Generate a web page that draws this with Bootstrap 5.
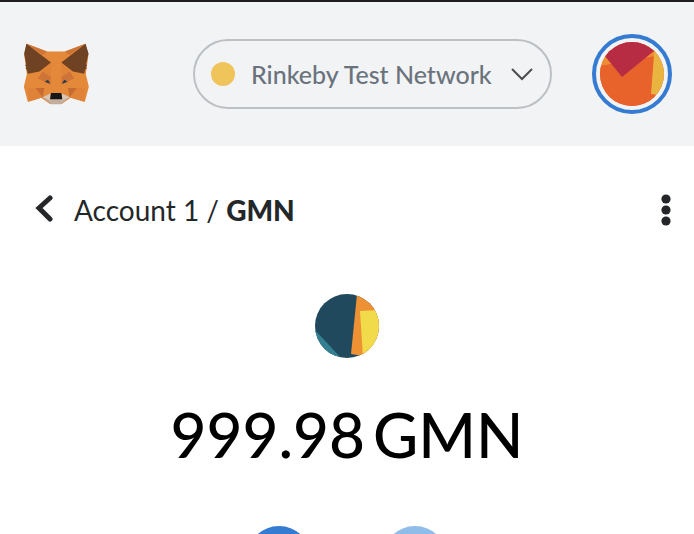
<!DOCTYPE html>
<html lang="en">
<head>
<meta charset="utf-8">
<meta name="viewport" content="width=device-width, initial-scale=1">
<title>GMN – Account 1</title>
<link href="https://cdn.jsdelivr.net/npm/bootstrap@5.3.0/dist/css/bootstrap.min.css" rel="stylesheet">
<style>
body { font-family: Lato, sans-serif; color: #24272a; }
.app-bar { background: #f2f3f4; border-top: 2px solid #1f1d22; padding: 32px 22px 32px 23px; gap: 40px; }
.network { border: 2px solid #bbc0c5; color: #6a737d; font-family: "Lato Medium", Lato, sans-serif; font-size: 25px; font-weight: 500; line-height: 32px; height: 70px; padding: 0 16px; gap: 16px; width: 359px; }
.network-dot { width: 24px; height: 24px; background: #efc55b; }
.avatar { width: 80px; height: 80px; border: 4px solid #357bd2; padding: 4px; }
.crumbs { padding: 44px 22px 0 34px; font-size: 28px; line-height: 40px; }
.crumbs a { color: inherit; }
.crumb-current { font-family: "Lato Black", Lato, sans-serif; font-weight: 900; }
.token { margin-top: 64px; }
.amount { color: #000; font-family: "Lato Medium", Lato, sans-serif; font-size: 62px; font-weight: 500; line-height: 80px; margin-top: 36px; gap: 8px; }
.actions { gap: 72px; margin-top: 52px; }
.action { width: 64px; height: 64px; background: #357bd2; }
.action:disabled { background: #8fbce9; }
</style>
</head>
<body class="bg-white vh-100 overflow-hidden">
<header class="app-bar d-flex align-items-center">
  <a href="#" aria-label="Home" class="d-block lh-1 me-auto">
    <svg class="d-block" width="66" height="62" viewBox="41 38 198 187" aria-hidden="true">
      <path fill="#e48839" d="M51 40l62 24h54l62-24 9 32-8 60 9 38-12 45-43-12-27 19h-35l-27-19-40 12-12-45 9-38-8-60z"/>
      <path fill="#ce7536" d="M51 40l62 24-13 10zM229 40l-62 24 13 10z"/>
      <path fill="#6f4224" d="M51 40l74 57-35 27-35 7-3-13-4-4 3-4-4-4 3-4-6-32zM229 40l-73 57 35 27 34 7 3-13 5-4-3-4 4-4-3-4 7-32z"/>
      <path fill="#cf7438" d="M99 124l-14 21 15 7 25 11-1-24zM182 124l13 21-15 7-24 11 1-24z"/>
      <path fill="#d97e39" d="M99 124l25-27-1 42zM182 124l-26-27 1 42z" opacity=".5"/>
      <path fill="#df8338" d="M55 174h24l22 28-44 13zM226 174h-24l-22 28 45 13z"/>
      <path fill="#c66c32" d="M78 174h27l-5 28zM203 174h-27l5 28z"/>
      <path fill="#c4ad9b" d="M100 202l23-12v17h35v-17l23 12-26 21h-30z"/>
      <path fill="#d8c6b7" d="M100 202l23-12-1 17 4 5zM181 202l-23-12 1 17-4 5z"/>
      <path fill="#161616" d="M125 189h31l3 19h-37z"/>
      <path fill="#263b4c" d="M106 155l10-6 6 12zM175 155l-10-6-7 12z"/>
    </svg>
  </a>
  <button type="button" class="network btn rounded-pill d-flex align-items-center">
    <span class="network-dot rounded-circle flex-shrink-0"></span>
    <span class="flex-grow-1 text-start text-nowrap">Rinkeby Test Network</span>
    <svg class="flex-shrink-0" width="24" height="16" viewBox="0 0 24 16" fill="none" stroke="#4d4d4d" stroke-width="2" aria-hidden="true"><path d="M2 3l10 10L22 3"/></svg>
  </button>
  <button type="button" class="avatar btn rounded-circle" aria-label="Account menu">
    <svg class="d-block" width="64" height="64" viewBox="0 0 64 64" aria-hidden="true">
      <clipPath id="avatarClip"><circle cx="32" cy="32" r="32"/></clipPath>
      <g clip-path="url(#avatarClip)">
        <path fill="#e8622b" d="M0 0h64v64H0z"/>
        <path fill="#ef8c33" d="M0 10v14l12-2 43-8V0z"/>
        <path fill="#e8622b" d="M0 24l55-9v49H0z"/>
        <path fill="#e9b43f" d="M55 0l-4 52 8 1h5V0z"/>
        <path fill="#b82c43" d="M0 8l22 27L54 9 64 0H0z"/>
      </g>
    </svg>
  </button>
</header>
<main>
  <nav class="crumbs d-flex align-items-center" aria-label="Breadcrumb">
    <button type="button" class="btn p-0 border-0 me-3" aria-label="Back">
      <svg class="d-block" width="24" height="30" viewBox="0 0 24 30" fill="none" stroke="#24272a" stroke-width="5" stroke-linecap="round" stroke-linejoin="miter" aria-hidden="true"><path d="M16 3L5 13l11 11"/></svg>
    </button>
    <div class="flex-grow-1"><a href="#" class="text-decoration-none">Account 1</a> / <span class="crumb-current">GMN</span></div>
    <button type="button" class="btn p-0 border-0" aria-label="Token options">
      <svg class="d-block" width="12" height="32" viewBox="0 0 12 32" fill="#24272a" aria-hidden="true"><circle cx="6" cy="5" r="4.6"/><circle cx="6" cy="16" r="4.6"/><circle cx="6" cy="27" r="4.6"/></svg>
    </button>
  </nav>
  <section>
    <svg class="token d-block mx-auto" width="64" height="64" viewBox="0 0 64 64" aria-hidden="true">
      <clipPath id="tokenClip"><circle cx="32" cy="32" r="32"/></clipPath>
      <g clip-path="url(#tokenClip)">
        <path fill="#20495d" d="M0 0h64v64H0z"/>
        <path fill="#348090" d="M0 36l26 28H0z"/>
        <path fill="#ee9034" d="M42 0l-6 60 12 2 16-2V0z"/>
        <path fill="#f2db4b" d="M45 17l19-1v48l-16-1z"/>
      </g>
    </svg>
    <div class="amount d-flex justify-content-center"><span>999.98</span> <span>GMN</span></div>
    <div class="actions d-flex justify-content-center">
      <button type="button" class="action btn border-0 rounded-circle" aria-label="Send"></button>
      <button type="button" class="action btn border-0 rounded-circle opacity-100" aria-label="Swap" disabled></button>
    </div>
  </section>
</main>
<script src="https://cdn.jsdelivr.net/npm/bootstrap@5.3.0/dist/js/bootstrap.bundle.min.js"></script>
</body>
</html>
